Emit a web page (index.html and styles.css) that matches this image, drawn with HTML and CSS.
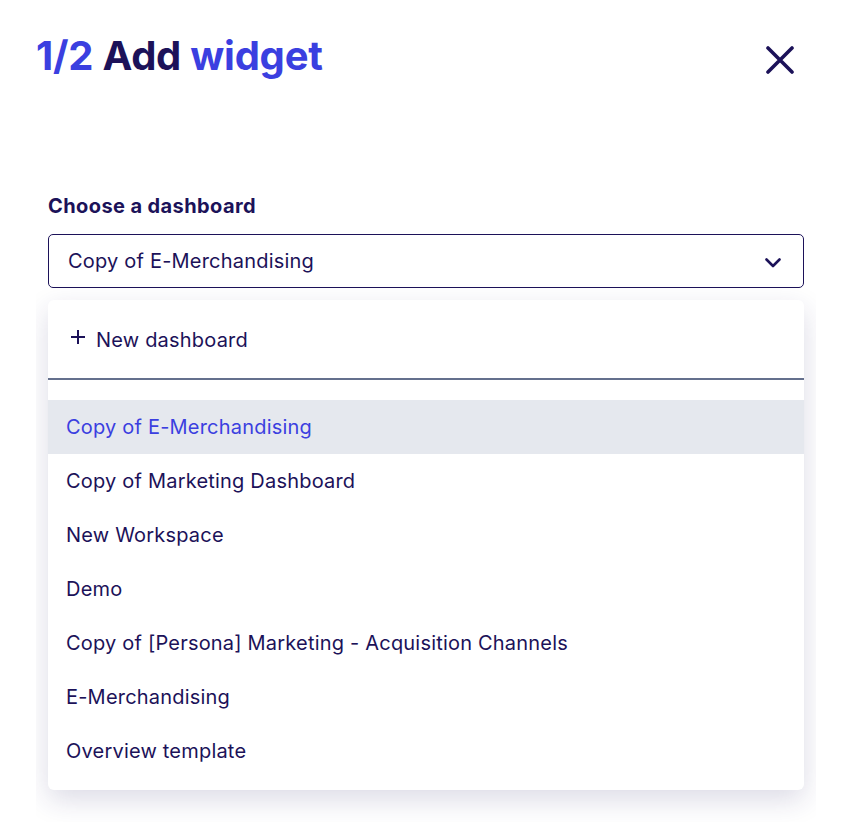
FILE: index.html
```html
<!DOCTYPE html>
<html>
<head lang="en">
    <meta charset="UTF-8">
    <title>Add widget</title>
    <link rel="stylesheet" href="styles.css">
</head>
<body>
<div class="modal">
    <div class="head">
        <h1 class="title"><span class="blue">1/2</span> Add <span class="blue">widget</span></h1>
        <span class="close">
            <svg width="28" height="28" viewBox="0 0 28 28"><path d="M2 2L26 26M26 2L2 26" stroke="#1c1259" stroke-width="3.6" stroke-linecap="round"/></svg>
        </span>
    </div>
    <div class="panel">
        <div class="label">Choose a dashboard</div>
        <div class="select">
            <span>Copy of E-Merchandising</span>
            <svg width="16" height="10" viewBox="0 0 16 10"><path d="M1.5 1.5L8 8L14.5 1.5" fill="none" stroke="#1c1259" stroke-width="2.6" stroke-linecap="round" stroke-linejoin="round"/></svg>
        </div>
        <div class="menu">
            <div class="new">
                <svg width="14" height="14" viewBox="0 0 14 14"><path d="M7 0V14M0 7H14" stroke="#1c1259" stroke-width="2"/></svg>
                <span>New dashboard</span>
            </div>
            <ul class="list">
                <li class="current">Copy of E-Merchandising</li>
                <li>Copy of Marketing Dashboard</li>
                <li>New Workspace</li>
                <li>Demo</li>
                <li>Copy of [Persona] Marketing - Acquisition Channels</li>
                <li>E-Merchandising</li>
                <li>Overview template</li>
            </ul>
        </div>
    </div>
</div>
</body>
</html>
```

FILE: styles.css
```css
* {
    padding: 0;
    margin: 0;
    list-style: none;
    box-sizing: border-box;
}

body {
    background: #fff;
    color: #1c1259;
    font-family: Inter, "Liberation Sans", sans-serif;
}

.modal {
    height: 822px;
    display: flex;
    flex-direction: column;
    overflow: hidden;
}

.head {
    display: flex;
    justify-content: space-between;
    align-items: flex-start;
    padding: 33px 64px 0 36px;
}

.title {
    font-size: 40px;
    font-weight: 700;
    line-height: 46px;
    letter-spacing: -0.25px;
    color: #1c1259;
}

.blue {
    color: #3b3fe0;
}

.close {
    display: block;
    margin-top: 13px;
}

.panel {
    flex: 1;
    margin: 115px 42px 0 36px;
    padding: 0 12px;
    overflow: hidden;
}

.label {
    font-size: 20px;
    font-weight: 700;
    line-height: 24px;
    letter-spacing: 0.4px;
    margin-bottom: 16px;
}

.select {
    height: 54px;
    border: 1px solid #1c1259;
    border-radius: 5px;
    display: flex;
    align-items: center;
    justify-content: space-between;
    padding: 0 22px 0 19px;
    font-size: 20px;
    letter-spacing: 0.2px;
}

.select svg {
    margin-top: 4px;
}

.menu {
    margin-top: 12px;
    background: #fff;
    border-radius: 6px;
    box-shadow: 0 10px 28px rgba(40, 30, 100, 0.16);
    padding-bottom: 12px;
}

.new {
    height: 80px;
    display: flex;
    align-items: center;
    padding: 2px 0 0 23px;
    font-size: 20px;
    letter-spacing: 0.2px;
    border-bottom: 2px solid #64708d;
}

.new svg {
    margin-right: 11px;
    margin-top: -6px;
}

.list {
    padding-top: 20px;
}

.list li {
    height: 54px;
    line-height: 54px;
    padding-left: 18px;
    font-size: 20px;
    letter-spacing: 0.2px;
}

.list li.current {
    background: #e5e8ee;
    color: #3b3fe0;
}
```
